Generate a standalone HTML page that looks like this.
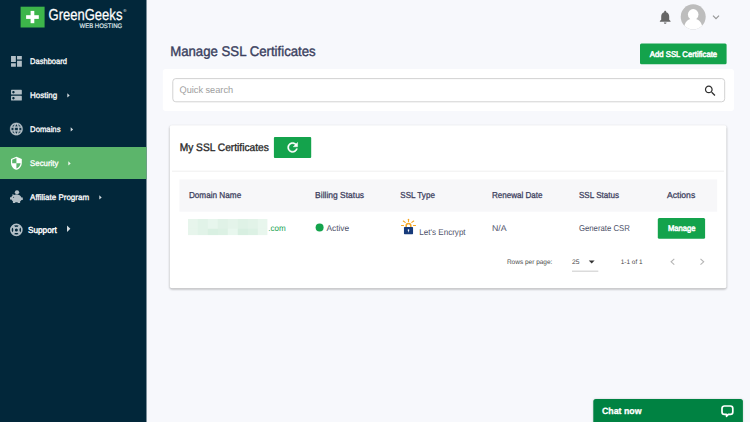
<!DOCTYPE html>
<html lang="en"><head><meta charset="utf-8"><title>Manage SSL Certificates</title>
<style>
*{box-sizing:border-box;margin:0;padding:0}
html,body{width:750px;height:422px;overflow:hidden;background:#f7f8fc;font-family:"Liberation Sans",sans-serif}
svg{position:absolute;overflow:visible}
</style></head><body>
<svg style="left:0;top:0" width="750" height="422" viewBox="0 0 750 422">
<defs><filter id="sh" x="-5%" y="-5%" width="110%" height="115%"><feGaussianBlur stdDeviation="0.950"/></filter>
<filter id="sh2" x="-5%" y="-20%" width="110%" height="140%"><feDropShadow dx="0" dy="0" stdDeviation="1.200" flood-color="#000" flood-opacity="0.160"/></filter></defs>
<rect x="0" y="0" width="146.5" height="422" fill="#02273a"/>
<rect x="0" y="147" width="146.5" height="32" fill="#5cb56b"/>
<rect x="20.6" y="6.7" width="24" height="20.8" fill="#3db54a"/>
<rect x="26.100" y="15.200" width="12.700" height="3.700" fill="#fff"/>
<rect x="30.600" y="10.900" width="3.700" height="12.300" fill="#fff"/>
<rect x="640" y="43.4" width="86.6" height="20.8" fill="#14a34c" rx="1.5"/>
<rect x="162.8" y="69" width="571.2" height="42" fill="#fff" rx="3"/>
<rect x="172.800" y="78.600" width="551.900" height="23.200" fill="#fff" rx="3" stroke="#cdcdcd" stroke-width="0.900"/>
<rect x="169.800" y="126.300" width="556.600" height="163" fill="#000" opacity="0.330" rx="2" filter="url(#sh)"/>
<rect x="169.800" y="125.200" width="556.600" height="163" fill="#fff" rx="2"/>
<rect x="273.9" y="137.1" width="37.3" height="20.9" fill="#14a34c" rx="1"/>
<rect x="172" y="170.700" width="552" height="1" fill="#efefef"/>
<rect x="179.4" y="179.4" width="537.8" height="32.3" fill="#f7f7f9"/>
<g><rect x="188" y="219" width="10.1" height="10" fill="#e7f5ec"/><rect x="188" y="228.8" width="10.1" height="6.3" fill="#e7f5ec"/><rect x="197.8" y="219" width="10.3" height="10" fill="#e1f3e8"/><rect x="197.8" y="228.8" width="10.3" height="6.3" fill="#e1f3e8"/><rect x="207.8" y="219" width="10.3" height="10" fill="#e7f6ed"/><rect x="207.8" y="228.8" width="10.3" height="6.3" fill="#d9f0e2"/><rect x="217.8" y="219" width="10.3" height="10" fill="#e0f2e7"/><rect x="217.8" y="228.8" width="10.3" height="6.3" fill="#dcf1e4"/><rect x="227.8" y="219" width="10.3" height="10" fill="#e4f4ea"/><rect x="227.8" y="228.8" width="10.3" height="6.3" fill="#e8f7ee"/><rect x="237.8" y="219" width="10.3" height="10" fill="#dff2e6"/><rect x="237.8" y="228.8" width="10.3" height="6.3" fill="#d8efe1"/><rect x="247.8" y="219" width="10.3" height="10" fill="#e2f3e8"/><rect x="247.8" y="228.8" width="10.3" height="6.3" fill="#dcf1e4"/><rect x="257.8" y="219" width="9.6" height="10" fill="#e8f6ed"/><rect x="257.8" y="228.8" width="9.6" height="6.3" fill="#e8f6ed"/></g>
<rect x="315.6" y="223.4" width="8" height="8" fill="#14a34c" rx="4"/>
<rect x="657.8" y="218.1" width="47.3" height="20.7" fill="#14a34c" rx="1.5"/>
<rect x="572" y="270.800" width="26.300" height="0.600" fill="#a5a5a5"/>
<rect x="593.300" y="398.900" width="149.600" height="30" fill="#038242" rx="2.500" filter="url(#sh2)"/>
<g transform="translate(9.24 54.2) scale(0.6)"><path fill="#b3bfc6" d="M3 13h8V3H3v10zm0 8h8v-6H3v6zm10 0h8V11h-8v10zm0-18v6h8V3h-8z"/></g>
<g transform="translate(9.24 88.0) scale(0.6)"><path fill="#b3bfc6" fill-rule="evenodd" d="M20 13H4c-.55 0-1 .45-1 1v6c0 .55.45 1 1 1h16c.55 0 1-.45 1-1v-6c0-.55-.45-1-1-1zM7 19c-1.1 0-2-.9-2-2s.9-2 2-2 2 .9 2 2-.9 2-2 2zM20 3H4c-.55 0-1 .45-1 1v6c0 .55.45 1 1 1h16c.55 0 1-.45 1-1V4c0-.55-.45-1-1-1zM7 9c-1.1 0-2-.9-2-2s.9-2 2-2 2 .9 2 2-.9 2-2 2z"/></g>
<g transform="translate(8.84 121.39) scale(0.63)"><path fill="#b3bfc6" stroke="#b3bfc6" stroke-width="0.400" d="M11.99 2C6.47 2 2 6.48 2 12s4.47 10 9.99 10C17.52 22 22 17.52 22 12S17.52 2 11.99 2zm6.93 6h-2.95c-.32-1.25-.78-2.45-1.38-3.56 1.84.63 3.37 1.91 4.33 3.56zM12 4.04c.83 1.2 1.48 2.53 1.91 3.96h-3.82c.43-1.43 1.08-2.76 1.91-3.96zM4.26 14C4.1 13.36 4 12.69 4 12s.1-1.36.26-2h3.38c-.08.66-.14 1.32-.14 2 0 .68.06 1.34.14 2H4.26zm.82 2h2.95c.32 1.25.78 2.45 1.38 3.56-1.84-.63-3.37-1.9-4.33-3.56zm2.95-8H5.08c.96-1.66 2.49-2.93 4.33-3.56C8.81 5.55 8.35 6.75 8.03 8zM12 19.96c-.83-1.2-1.48-2.53-1.91-3.96h3.82c-.43 1.43-1.08 2.76-1.91 3.96zM14.34 14H9.66c-.09-.66-.16-1.32-.16-2 0-.68.07-1.35.16-2h4.68c.09.65.16 1.32.16 2 0 .68-.07 1.34-.16 2zm.25 5.56c.6-1.11 1.06-2.31 1.38-3.56h2.95c-.96 1.65-2.49 2.93-4.33 3.56zM16.36 14c.08-.66.14-1.32.14-2 0-.68-.06-1.34-.14-2h3.38c.16.64.26 1.31.26 2s-.1 1.36-.26 2h-3.38z"/></g>
<g transform="translate(9.2 156.05) scale(0.6)"><path fill="#fff" d="M12 1L3 5v6c0 5.55 3.84 10.740 9 12 5.160-1.260 9-6.450 9-12V5l-9-4zm0 10.990h7c-.53 4.120-3.280 7.790-7 8.940V12H5V6.300l7-3.110v8.800z"/></g>
<g transform="translate(9 189)">
 <circle cx="8" cy="3.3" r="2.15" fill="#b3bfc6"/>
 <path fill="#b3bfc6" d="M3.6 6.6 L3.3 5.2 C4.1 5.2 4.8 5.5 5.3 5.9 C5.9 5.7 6.6 5.6 7.4 5.6 C10 5.6 11.8 6.8 12.4 8.4 L13.8 8.4 L13.8 10.9 L12.5 10.9 C12.2 11.5 11.7 12 11.1 12.4 L11.1 14.1 L8.7 14.1 L8.7 13.2 C8.3 13.25 7.8 13.3 7.4 13.3 C7 13.3 6.6 13.25 6.2 13.2 L6.2 14.1 L3.9 14.1 L3.9 12.3 C3.2 11.8 2.7 11.3 2.4 10.6 L1 10.6 L1 8.2 L2.3 8.2 C2.5 7.6 3 7 3.6 6.6 Z"/>
 <circle cx="4.6" cy="8.2" r="0.5" fill="#02273a"/>
</g>
<g transform="translate(9.37 222.88)">
 <circle cx="7" cy="7" r="5.500" fill="none" stroke="#b3bfc6" stroke-width="1.600"/>
 <circle cx="7" cy="7" r="2.350" fill="none" stroke="#b3bfc6" stroke-width="1.700"/>
 <path d="M3 3 L5.400 5.400 M11 3 L8.600 5.400 M3 11 L5.400 8.600 M11 11 L8.600 8.600" stroke="#b3bfc6" stroke-width="2.700"/>
</g>
<g transform="translate(657.2 9.05) scale(0.666667)"><path fill="#666" d="M12 22c1.100 0 2-.9 2-2h-4c0 1.100.89 2 2 2zm6-6v-5c0-3.070-1.640-5.640-4.500-6.320V4c0-.83-.67-1.500-1.500-1.500s-1.500.67-1.500 1.500v.68C7.630 5.360 6 7.920 6 11v5l-2 2v1h16v-1l-2-2z"/></g>
<g transform="translate(680.7 4.3)"><defs><clipPath id="av"><circle cx="12.5" cy="12.5" r="12.500"/></clipPath></defs>
 <circle cx="12.5" cy="12.5" r="12.5" fill="#bdbdbd"/>
 <g clip-path="url(#av)" fill="#fff"><circle cx="12.5" cy="10.1" r="5.3"/><path d="M3.200 25 C3.200 18 7.500 14.200 12.500 14.200 C17.500 14.200 21.800 18 21.800 25 Z"/></g>
</g>
<g transform="translate(712.7 15.2)"><path d="M0.300 0.400 L3.300 3.400 L6.300 0.400" fill="none" stroke="#979797" stroke-width="1.200"/></g>
<g transform="translate(703.1 83.7) scale(0.6)"><path fill="#2f2f2f" d="M15.500 14h-.79l-.28-.27C15.410 12.590 16 11.110 16 9.500 16 5.910 13.090 3 9.500 3S3 5.910 3 9.500 5.910 16 9.500 16c1.610 0 3.090-.59 4.230-1.570l.27.280v.79l5 4.990L20.490 19l-4.990-5zm-6 0C7.010 14 5 11.990 5 9.500S7.010 5 9.500 5 14 7.010 14 9.500 11.990 14 9.500 14z"/></g>
<g transform="translate(285.1 139.9) scale(0.625)"><path fill="#fff" stroke="#fff" stroke-width="0.700" d="M17.650 6.350C16.200 4.900 14.210 4 12 4c-4.420 0-7.990 3.580-7.990 8s3.570 8 7.990 8c3.730 0 6.840-2.550 7.730-6h-2.080c-.82 2.330-3.040 4-5.650 4-3.310 0-6-2.690-6-6s2.690-6 6-6c1.660 0 3.140.69 4.220 1.780L13 11h7V4l-2.350 2.350z"/></g>
<g transform="translate(400 217)">
 <g stroke="#f6a623" stroke-width="1.150" stroke-linecap="round" fill="none">
  <path d="M8.500 2.300 L8.500 4.500"/><path d="M3.300 4 L5.200 5.400"/><path d="M13.700 4 L11.800 5.400"/><path d="M1.500 8.500 L3.500 8.500"/><path d="M15.500 8.500 L13.500 8.500"/>
 </g>
 <path d="M6.150 10.500 L6.150 8.900 A2.350 2.350 0 0 1 10.850 8.900 L10.850 10.500" fill="none" stroke="#f6a623" stroke-width="1.500"/>
 <rect x="3.950" y="10" width="9.100" height="7.250" rx="0.700" fill="#173a7a"/>
 <circle cx="8.500" cy="13.100" r="0.850" fill="#fff"/><path d="M8.050 13.300 L8.950 13.300 L8.750 15.300 L8.250 15.300 Z" fill="#fff"/>
</g>
<g transform="translate(670.4 258.5)"><path d="M3.900 0.400 L0.700 3.300 L3.900 6.200" fill="none" stroke="#b4b4b4" stroke-width="1.100"/></g>
<g transform="translate(700 258.5)"><path d="M0.500 0.400 L3.700 3.300 L0.500 6.200" fill="none" stroke="#b4b4b4" stroke-width="1.100"/></g>
<g transform="translate(720 404)"><path d="M4.400 2 L10.400 2 A2.400 2.400 0 0 1 12.800 4.400 L12.800 8 A2.400 2.400 0 0 1 10.400 10.400 L8.300 10.400 L6.600 12.300 L6.400 10.400 L4.400 10.400 A2.400 2.400 0 0 1 2 8 L2 4.400 A2.400 2.400 0 0 1 4.400 2 Z" fill="none" stroke="#fff" stroke-width="1.700" stroke-linejoin="round"/></g>
<polygon points="67.3,93.2 69.7,95.4 67.3,97.6" fill="#d5dce0"/>
<polygon points="70.7,127.2 73.1,129.4 70.7,131.6" fill="#d5dce0"/>
<polygon points="68.3,161.2 70.7,163.4 68.3,165.6" fill="#f0f8f1"/>
<polygon points="99.3,195.2 101.700,197.400 99.3,199.600" fill="#d5dce0"/>
<polygon points="67,225.500 70.400,228.700 67,231.900" fill="#d5dce0"/>
<polygon points="588.8,260.6 594.6,260.6 591.7,263.5" fill="#333"/>
</svg>
<svg style="left:0;top:0" width="750" height="422" viewBox="0 0 750 422" font-family="'Liberation Sans', sans-serif" text-rendering="geometricPrecision">
<text transform="translate(48.50 19.60) scale(0.8251 1)" font-size="15.8" fill="#fff" stroke="#fff" stroke-width="0.25">GreenGeeks</text>
<text transform="translate(123.20 11.70)" font-size="4.4" fill="#e4e9ec">®</text>
<text transform="translate(79.50 27.50) scale(0.9106 1)" font-size="6.6" fill="#dfe5e8" stroke="#dfe5e8" stroke-width="0.2">WEB HOSTING</text>
<text transform="translate(30.10 63.90) scale(0.9186 1)" font-size="8.2" fill="#fff" stroke="#fff" stroke-width="0.3">Dashboard</text>
<text transform="translate(30.10 97.90) scale(0.9724 1)" font-size="8.2" fill="#fff" stroke="#fff" stroke-width="0.3">Hosting</text>
<text transform="translate(30.10 131.90) scale(0.9408 1)" font-size="8.2" fill="#fff" stroke="#fff" stroke-width="0.3">Domains</text>
<text transform="translate(30.10 165.90) scale(0.9534 1)" font-size="8.2" fill="#fff" stroke="#fff" stroke-width="0.3">Security</text>
<text transform="translate(30.10 199.90) scale(0.9772 1)" font-size="8.2" fill="#fff" stroke="#fff" stroke-width="0.3">Affiliate Program</text>
<text transform="translate(28.00 232.55) scale(0.9314 1)" font-size="8.8" fill="#fff" stroke="#fff" stroke-width="0.4">Support</text>
<text transform="translate(170.20 55.50) scale(0.9427 1)" font-size="14" fill="#3a3f5e" stroke="#3a3f5e" stroke-width="0.4">Manage SSL Certificates</text>
<text transform="translate(649.80 57.10) scale(0.9472 1)" font-size="8.2" fill="#fff" stroke="#fff" stroke-width="0.5">Add SSL Certificate</text>
<text transform="translate(179.50 92.90) scale(0.9669 1)" font-size="9.5" fill="#9e9e9e">Quick search</text>
<text transform="translate(179.70 150.90) scale(0.9357 1)" font-size="10.9" fill="#2a2a2a" stroke="#2a2a2a" stroke-width="0.35">My SSL Certificates</text>
<text transform="translate(188.90 198.30) scale(0.9418 1)" font-size="8.7" fill="#3d4160" stroke="#3d4160" stroke-width="0.28">Domain Name</text>
<text transform="translate(315.10 198.30) scale(0.9754 1)" font-size="8.7" fill="#3d4160" stroke="#3d4160" stroke-width="0.28">Billing Status</text>
<text transform="translate(400.30 198.30) scale(0.9300 1)" font-size="8.7" fill="#3d4160" stroke="#3d4160" stroke-width="0.28">SSL Type</text>
<text transform="translate(491.90 198.30) scale(0.9289 1)" font-size="8.7" fill="#3d4160" stroke="#3d4160" stroke-width="0.28">Renewal Date</text>
<text transform="translate(578.90 198.30) scale(0.9318 1)" font-size="8.7" fill="#3d4160" stroke="#3d4160" stroke-width="0.28">SSL Status</text>
<text transform="translate(667.00 198.30) scale(0.9895 1)" font-size="8.7" fill="#3d4160" stroke="#3d4160" stroke-width="0.28">Actions</text>
<text transform="translate(268.20 231.10) scale(0.9500 1)" font-size="8.5" fill="#22a455">.com</text>
<text transform="translate(326.40 231.10) scale(0.9846 1)" font-size="8.5" fill="#4d5068">Active</text>
<text transform="translate(419.30 234.70) scale(0.9473 1)" font-size="8.5" fill="#4d5068">Let&#39;s Encrypt</text>
<text transform="translate(491.90 231.10) scale(1.0302 1)" font-size="8.5" fill="#4d5068">N/A</text>
<text transform="translate(578.90 231.10) scale(0.9148 1)" font-size="8.5" fill="#4d5068">Generate CSR</text>
<text transform="translate(668.00 231.40) scale(0.9326 1)" font-size="8.2" fill="#fff" stroke="#fff" stroke-width="0.5">Manage</text>
<text transform="translate(506.90 264.20) scale(0.9851 1)" font-size="6.6" fill="#484848">Rows per page:</text>
<text transform="translate(572.10 264.20) scale(1.0213 1)" font-size="6.6" fill="#484848">25</text>
<text transform="translate(620.80 264.20) scale(0.9698 1)" font-size="6.6" fill="#484848">1-1 of 1</text>
<text transform="translate(602.00 414.10) scale(0.9653 1)" font-size="9.1" fill="#fff" font-weight="bold" stroke="#fff" stroke-width="0.3">Chat now</text>
</svg>
</body></html>
